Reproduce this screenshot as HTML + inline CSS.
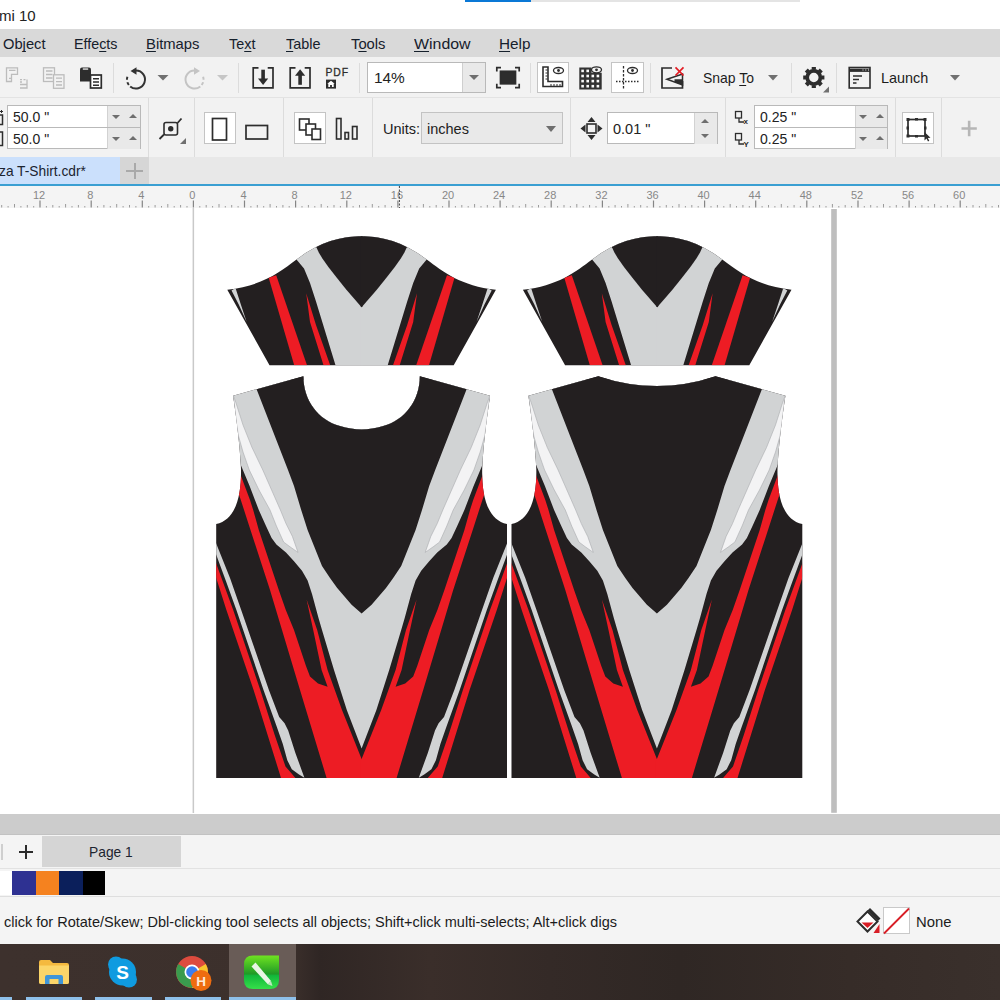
<!DOCTYPE html>
<html>
<head>
<meta charset="utf-8">
<title>CorelDRAW - T-Shirt</title>
<style>
*{box-sizing:border-box;margin:0;padding:0}
html,body{width:1000px;height:1000px;overflow:hidden;background:#fff}
body{position:relative;font-family:"Liberation Sans",sans-serif;color:#1a1a1a;font-size:14px}
.abs{position:absolute}
#title{left:0;top:0;width:1000px;height:29px;background:#fff}
#title .t{left:-1px;top:5.500px;font-size:15px;line-height:20px;color:#222;white-space:nowrap}
#menubar{left:0;top:29px;width:1000px;height:28px;background:#d9d9d9}
#menubar span{position:absolute;top:5.500px;font-size:15px;line-height:18px;color:#16202c;white-space:nowrap;transform-origin:0 50%}
#menubar u{text-decoration:underline;text-underline-offset:2px;text-decoration-skip-ink:none}
#tb1{left:0;top:57px;width:1000px;height:40px;background:#f2f2f2}
#tb2{left:0;top:97px;width:1000px;height:60px;background:#f2f2f2;border-top:1px solid #e3e3e3}
.sep{position:absolute;width:1px;background:#dcdcdc}
#tabbar{left:0;top:157px;width:1000px;height:28px;background:#e8e8e8}
#ruler{left:0;top:185px;width:1000px;height:23.500px;background:#f4f4f4;border-bottom:1px solid #dadada}
#canvas{left:0;top:208px;width:1000px;height:606px;background:#fff;overflow:hidden}
#hscroll{left:0;top:814px;width:1000px;height:21px;background:#cccccc;border-bottom:1px solid #c2c2c2}
#pagetabs{left:0;top:835px;width:1000px;height:33px;background:#f4f4f4}
#palette{left:0;top:868px;width:1000px;height:28px;background:#f4f4f4;border-top:1px solid #e2e2e2}
#status{left:0;top:896px;width:1000px;height:48px;background:#f4f4f4;border-top:1px solid #dedede}
#taskbar{left:0;top:944px;width:1000px;height:56px;background:linear-gradient(90deg,#3d312d 0%,#3c302c 29%,#2f2624 32%,#3a2e2a 43%,#342a27 55%,#2f2724 68%,#362c28 85%,#3a302c 100%)}
.inp{position:absolute;background:#fff;border:1px solid #b9b9b9;font-size:14px;color:#222}
.inp .v{position:absolute;left:5px;top:2px;line-height:18px;white-space:nowrap}
.spin{position:absolute;background:#e9e9e9}
.tri-d{position:absolute;width:0;height:0;border-left:4px solid transparent;border-right:4px solid transparent;border-top:4px solid #6e6e6e}
.tri-u{position:absolute;width:0;height:0;border-left:4px solid transparent;border-right:4px solid transparent;border-bottom:4px solid #6e6e6e}
.btnbox{position:absolute;background:#fff;border:1px solid #c4c4c4}
svg{position:absolute;left:0;top:0;overflow:visible}
.lbl{position:absolute;white-space:nowrap;color:#1c1c1c;transform-origin:0 50%}
</style>
</head>
<body>
<!-- TITLE -->
<div id="title" class="abs">
  <div class="abs" style="left:465px;top:0;width:66px;height:2px;background:#0a78d6"></div>
  <div class="abs" style="left:531px;top:0;width:269px;height:2px;background:#e4e4e4"></div>
  <div class="abs t">mi 10</div>
</div>
<!-- MENUBAR -->
<div id="menubar" class="abs">
  <span style="left:3px;transform:scaleX(0.98)">Ob<u>j</u>ect</span>
  <span style="left:74px;transform:scaleX(0.952)">Effe<u>c</u>ts</span>
  <span style="left:146px;transform:scaleX(0.987)"><u>B</u>itmaps</span>
  <span style="left:229px;transform:scaleX(0.96)">Te<u>x</u>t</span>
  <span style="left:286px;transform:scaleX(0.96)"><u>T</u>able</span>
  <span style="left:351px;transform:scaleX(0.985)">T<u>o</u>ols</span>
  <span style="left:414px;transform:scaleX(1.06)"><u>W</u>indow</span>
  <span style="left:499px;transform:scaleX(1.02)"><u>H</u>elp</span>
</div>
<!-- TOOLBAR 1 -->
<div id="tb1" class="abs">
 <div class="sep" style="left:113px;top:6px;height:30px"></div>
 <div class="sep" style="left:238px;top:6px;height:30px"></div>
 <div class="sep" style="left:359px;top:6px;height:30px"></div>
 <div class="sep" style="left:530px;top:6px;height:30px"></div>
 <div class="sep" style="left:650px;top:6px;height:30px"></div>
 <div class="sep" style="left:791px;top:6px;height:30px"></div>
 <div class="sep" style="left:836px;top:6px;height:30px"></div>
 <!-- zoom combobox -->
 <div class="inp" style="left:367px;top:5px;width:119px;height:31px"><div class="v" style="left:6px;top:6px;font-size:15.400px">14%</div>
   <div class="spin" style="left:94px;top:0;width:23px;height:29px;border-left:1px solid #cfcfcf"></div>
   <div class="tri-d" style="left:101px;top:12px;border-left-width:5px;border-right-width:5px;border-top-width:5px"></div>
 </div>
 <!-- highlighted button boxes -->
 <div class="btnbox" style="left:537px;top:5px;width:32px;height:31px"></div>
 <div class="btnbox" style="left:611px;top:5px;width:33px;height:31px"></div>
 <div class="lbl" style="left:703px;top:12.300px;font-size:15px;transform:scaleX(0.930);line-height:18px">Snap <u style="text-underline-offset:2px">T</u>o</div>
 <div class="lbl" style="left:881px;top:12.300px;font-size:15px;transform:scaleX(0.960);line-height:18px">Launch</div>
 <svg width="1000" height="40" viewBox="0 57 1000 40">
  <!-- icon 1 disabled -->
  <g fill="none" stroke="#bcbcbc" stroke-width="1.300">
   <path d="M6.500,67.800 H17.500 V74.300 H11.500 V81.500 H6.500 Z"/><path d="M9,70.300 H15.500 M9,78.300 H11"/>
   <path d="M20,79.700H22M23.500,79.700H25.500M27,79.500V88H20M20,84.500H26.500M20,82H22" />
  </g>
  <!-- icon 2 disabled -->
  <g fill="none" stroke="#bcbcbc" stroke-width="1.300">
   <rect x="43.500" y="67.800" width="11" height="13.700"/><path d="M46,71H52.500M46,74.500H52.500M46,78H52.500"/>
   <rect x="53.500" y="74.800" width="10.500" height="13.500" fill="#f2f2f2"/><path d="M56,78.200H62M56,81.600H62M56,85H62"/>
  </g>
  <!-- paste -->
  <g>
   <path d="M80,69.500 q0,-2 2,-2 h7 q2,0 2,2 V81.500 H80 Z" fill="#2d2d2d"/>
   <rect x="82.800" y="68.400" width="5.400" height="1.300" fill="#f2f2f2"/>
   <rect x="90.500" y="75" width="10.800" height="13" fill="#fff" stroke="#2d2d2d" stroke-width="1.700"/>
   <path d="M93,78.700H99M93,82H99M93,85.300H99" stroke="#2d2d2d" stroke-width="1.500"/>
  </g>
  <!-- undo -->
  <g fill="none" stroke="#333" stroke-width="2">
   <path d="M136,70.500 A9,9 0 1 1 130.200,86.400"/>
   <path d="M130.200,86.400 A9,9 0 0 1 127.500,76.400" stroke-dasharray="3 2.500" stroke-dashoffset="-2"/>
   <path d="M130.500,71 L136.500,67.200 L136.500,74.800Z" fill="#333" stroke="none"/>
  </g>
  <path d="M157.500,75 h11 l-5.500,5.500z" fill="#707070"/>
  <!-- redo disabled -->
  <g fill="none" stroke="#c4c4c4" stroke-width="2" transform="translate(330.500,0) scale(-1,1)">
   <path d="M136,70.500 A9,9 0 1 1 130.200,86.400"/>
   <path d="M130.200,86.400 A9,9 0 0 1 127.500,76.400" stroke-dasharray="3 2.500" stroke-dashoffset="-2"/>
   <path d="M130.500,71 L136.500,67.200 L136.500,74.800Z" fill="#c4c4c4" stroke="none"/>
  </g>
  <path d="M217,75 h11 l-5.500,5.500z" fill="#c6c6c6"/>
  <!-- import -->
  <g fill="none" stroke="#2d2d2d" stroke-width="1.700">
   <path d="M258.500,67.800 H253.200 V87.800 H273 V67.800 H267.700"/>
   <path d="M263.100,69.700 V80" stroke-width="3.600"/>
   <path d="M258,78.600 L263.100,85 L268.200,78.600 Z" fill="#2d2d2d" stroke="none"/>
  </g>
  <!-- export -->
  <g fill="none" stroke="#2d2d2d" stroke-width="1.700">
   <path d="M295.500,67.800 H290.200 V87.800 H310 V67.800 H304.700"/>
   <path d="M300.100,74.500 V84.800" stroke-width="3.600"/>
   <path d="M295,75.700 L300.100,69.200 L305.200,75.700 Z" fill="#2d2d2d" stroke="none"/>
  </g>
  <!-- PDF -->
  <text x="325.500" y="75.700" font-family="Liberation Sans, sans-serif" font-size="10.400" fill="#2d2d2d" stroke="#2d2d2d" stroke-width="0.300" textLength="22.500">PDF</text>
  <rect x="326" y="79.600" width="10" height="9" fill="#2d2d2d"/>
  <path d="M328.300,87 v-3.200 h-1 l3.700,-3 l3.700,3 h-1 v3.200 h-1.800 v-2 h-1.800 v2z" fill="#fff"/>
  <!-- full screen -->
  <g fill="none" stroke="#2d2d2d" stroke-width="1.700">
   <rect x="500.500" y="71.300" width="15" height="12.500" fill="#2d2d2d"/>
   <path d="M496.800,71.500 V67.700 H501 M515,67.700 H519.200 V71.500 M519.200,83.800 V87.600 H515 M501,87.600 H496.800 V83.800"/>
  </g>
  <!-- rulers icon -->
  <g fill="none" stroke="#2d2d2d" stroke-width="1.600">
   <path d="M543,67 V86.500 H562.500 V81.500 H548 V67 Z"/>
   <path d="M545.500,70H547.500M545.500,73H547.500M545.500,76H547.500M545.500,79H547.500M551,84V86M554,84V86M557,84V86M560,84V86" stroke-width="1"/>
   <ellipse cx="558.500" cy="70.500" rx="5" ry="3" stroke-width="1.300"/><circle cx="558.500" cy="70.500" r="1.400" fill="#2d2d2d" stroke="none"/>
  </g>
  <!-- grid icon -->
  <g>
   <path d="M579.300,67.600 H591.500 V72.700 H601.700 V89.600 H579.300 Z" fill="#333"/>
   <g fill="#fafafa"><rect x="581.3" y="69.6" width="2.600" height="2.600"/><rect x="586.4" y="69.6" width="2.600" height="2.600"/><rect x="581.3" y="74.7" width="2.600" height="2.600"/><rect x="586.4" y="74.7" width="2.600" height="2.600"/><rect x="591.5" y="74.7" width="2.600" height="2.600"/><rect x="596.6" y="74.7" width="2.600" height="2.600"/><rect x="581.3" y="79.8" width="2.600" height="2.600"/><rect x="586.4" y="79.8" width="2.600" height="2.600"/><rect x="591.5" y="79.8" width="2.600" height="2.600"/><rect x="596.6" y="79.8" width="2.600" height="2.600"/><rect x="581.3" y="84.9" width="2.600" height="2.600"/><rect x="586.4" y="84.9" width="2.600" height="2.600"/><rect x="591.5" y="84.9" width="2.600" height="2.600"/><rect x="596.6" y="84.9" width="2.600" height="2.600"/></g>
   <ellipse cx="596.500" cy="69.800" rx="5" ry="3" fill="#f2f2f2" stroke="#2d2d2d" stroke-width="1.300"/><circle cx="596.500" cy="69.800" r="1.400" fill="#2d2d2d"/>
  </g>
  <!-- guidelines icon -->
  <g fill="none" stroke="#2d2d2d" stroke-width="1.300">
   <path d="M623.500,66V89" stroke-dasharray="2.500 1.500"/>
   <path d="M616,81.500H639" stroke-dasharray="1.500 1.500"/>
   <ellipse cx="632.500" cy="70.500" rx="5" ry="3"/><circle cx="632.500" cy="70.500" r="1.400" fill="#2d2d2d" stroke="none"/>
  </g>
  <!-- snap off -->
  <g fill="none" stroke="#2d2d2d" stroke-width="1.700">
   <path d="M672,68 H662 V88 H682.500 V81"/>
   <path d="M667,79.300 L682.500,74 V85 Z" stroke-width="1.500"/>
   <path d="M674.500,79.300 H682.500 V85 L674.500,82Z" fill="#2d2d2d" stroke="none"/>
   <path d="M675.500,67.300 L683.500,75.500 M683.500,67.300 L675.500,75.500" stroke="#e31b23" stroke-width="1.700"/>
  </g>
  <path d="M768,75 h10 l-5,5.500z" fill="#707070"/>
  <!-- gear -->
  <g>
   <circle cx="813.800" cy="77.500" r="6.600" fill="none" stroke="#2d2d2d" stroke-width="3.700"/>
   <path d="M821.60,77.50L824.40,77.50M819.32,83.02L821.30,85.00M813.80,85.30L813.80,88.10M808.28,83.02L806.30,85.00M806.00,77.50L803.20,77.50M808.28,71.98L806.30,70.00M813.80,69.70L813.80,66.90M819.32,71.98L821.30,70.00" stroke="#2d2d2d" stroke-width="4.200" fill="none"/>
   <path d="M829,86.500 v6 h-6z" fill="#707070"/>
  </g>
  <!-- launch icon -->
  <g fill="none" stroke="#2d2d2d" stroke-width="1.600">
   <rect x="849.200" y="67.500" width="20.800" height="20.500"/>
   <path d="M849.200,70.300H870" stroke-width="3.200"/>
   <path d="M862.500,70H863.500M865.300,70H866.300M868,70H869" stroke="#f2f2f2" stroke-width="1"/>
   <path d="M853,76H862M853,79.500H859M853,83H856.500" stroke-width="1.400"/>
  </g>
  <path d="M950,75 h10 l-5,5.500z" fill="#707070"/>
 </svg>
</div>
<!-- PROPERTY BAR -->
<div id="tb2" class="abs">
 <div class="sep" style="left:148px;top:0;height:59px"></div>
 <div class="sep" style="left:194px;top:0;height:59px"></div>
 <div class="sep" style="left:283px;top:0;height:59px"></div>
 <div class="sep" style="left:372px;top:0;height:59px"></div>
 <div class="sep" style="left:570px;top:0;height:59px"></div>
 <div class="sep" style="left:725px;top:0;height:59px"></div>
 <div class="sep" style="left:895px;top:0;height:59px"></div>
 <div class="sep" style="left:941px;top:0;height:59px"></div>
 <!-- page size inputs -->
 <div class="inp" style="left:7px;top:7px;width:134px;height:23px"><div class="v">50.0 "</div>
   <div class="spin" style="left:99px;top:0;width:33px;height:21px;border-left:1px solid #d2d2d2"></div>
   <div class="tri-d" style="left:104px;top:9px"></div><div class="tri-u" style="left:121px;top:8px"></div></div>
 <div class="inp" style="left:7px;top:29px;width:134px;height:22px"><div class="v">50.0 "</div>
   <div class="spin" style="left:99px;top:0;width:33px;height:21px;border-left:1px solid #d2d2d2"></div>
   <div class="tri-d" style="left:104px;top:9px"></div><div class="tri-u" style="left:121px;top:8px"></div></div>
 <!-- portrait / landscape -->
 <div class="btnbox" style="left:204px;top:14px;width:32px;height:32px"></div>
 <div class="btnbox" style="left:294px;top:14px;width:32px;height:32px"></div>
 <div class="lbl" style="left:383px;top:22px;font-size:14.5px;line-height:18px">Units:</div>
 <div class="inp" style="left:421px;top:14px;width:142px;height:32px;background:#e9e9e9;border-color:#c3c3c3"><div class="v" style="left:5px;top:7px;font-size:14.5px">inches</div>
   <div class="tri-d" style="left:123.500px;top:12.500px;border-left-width:5.500px;border-right-width:5.500px;border-top-width:6px"></div></div>
 <!-- nudge input -->
 <div class="inp" style="left:607px;top:14px;width:111px;height:32px"><div class="v" style="left:5px;top:7px;font-size:14.5px">0.01 "</div>
   <div class="spin" style="left:86px;top:0;width:23px;height:31px;border-left:1px solid #d2d2d2"></div>
   <div class="tri-u" style="left:93px;top:6px"></div><div class="tri-d" style="left:93px;top:21px"></div></div>
 <!-- duplicate distance inputs -->
 <div class="inp" style="left:754px;top:7px;width:134px;height:23px"><div class="v">0.25 "</div>
   <div class="spin" style="left:100px;top:0;width:32px;height:21px;border-left:1px solid #d2d2d2"></div>
   <div class="tri-d" style="left:104px;top:9px"></div><div class="tri-u" style="left:121px;top:8px"></div></div>
 <div class="inp" style="left:754px;top:29px;width:134px;height:22px"><div class="v">0.25 "</div>
   <div class="spin" style="left:100px;top:0;width:32px;height:21px;border-left:1px solid #d2d2d2"></div>
   <div class="tri-d" style="left:104px;top:9px"></div><div class="tri-u" style="left:121px;top:8px"></div></div>
 <div class="btnbox" style="left:902px;top:14px;width:32px;height:32px"></div>
 <svg width="1000" height="60" viewBox="0 97 1000 60">
  <!-- partial left icons -->
  <g fill="none" stroke="#2d2d2d" stroke-width="1.500">
   <rect x="-5" y="114" width="7.500" height="9.500"/><path d="M1.500,109V112M0,110.500H3" stroke-width="1"/>
   <rect x="-5" y="131" width="7.500" height="13.500"/>
  </g>
  <!-- resize icon -->
  <g fill="none" stroke="#2d2d2d" stroke-width="1.600">
   <rect x="164" y="121.500" width="13.500" height="12.500" rx="2"/>
   <circle cx="170.750" cy="127.750" r="2.700" fill="#2d2d2d" stroke="none"/>
   <path d="M159.500,138 L164,133.500 M177.500,122 L181.500,117.500" stroke-width="1.800"/>
   <path d="M186,137 v6 h-6z" fill="#707070" stroke="none"/>
  </g>
  <!-- portrait -->
  <rect x="212.500" y="117.500" width="14" height="21.500" fill="#fff" stroke="#2d2d2d" stroke-width="1.700"/>
  <!-- landscape -->
  <rect x="246" y="124.500" width="21.500" height="13.500" fill="none" stroke="#2d2d2d" stroke-width="1.700"/>
  <!-- all pages -->
  <g fill="#fff" stroke="#2d2d2d" stroke-width="1.600">
   <rect x="299.500" y="118" width="9.500" height="11"/>
   <rect x="306" y="123" width="9.500" height="11"/>
   <rect x="312" y="128" width="8.500" height="10.500"/>
  </g>
  <!-- current page -->
  <g fill="none" stroke="#2d2d2d" stroke-width="1.600">
   <rect x="336.500" y="117.500" width="4.500" height="20.500"/>
   <rect x="345" y="131.500" width="3.500" height="6.500"/>
   <rect x="352.500" y="125.500" width="4.500" height="12.500"/>
  </g>
  <!-- nudge icon -->
  <g fill="#2d2d2d">
   <rect x="587" y="123" width="9" height="9" fill="none" stroke="#2d2d2d" stroke-width="1.600"/>
   <path d="M591.500,116 l4,5 h-8z M591.500,139 l4,-5 h-8z M580.500,127.500 l5,-4 v8z M602.500,127.500 l-5,-4 v8z"/>
  </g>
  <!-- dup distance icons -->
  <g fill="none" stroke="#2d2d2d" stroke-width="1.300">
   <rect x="735.500" y="110.500" width="6" height="6.500"/><path d="M739,117 V121 H744"/>
   <rect x="735.500" y="132.500" width="6" height="6.500"/><path d="M739,139 V143 H744"/>
  </g>
  <text x="743.500" y="123" font-family="Liberation Sans, sans-serif" font-size="8" font-weight="bold" fill="#2d2d2d">x</text>
  <text x="743.500" y="146" font-family="Liberation Sans, sans-serif" font-size="8" font-weight="bold" fill="#2d2d2d">Y</text>
  <!-- bounding box icon -->
  <g fill="none" stroke="#2d2d2d" stroke-width="1.700">
   <rect x="908" y="118.500" width="17" height="16.500"/>
  </g>
  <g fill="#2d2d2d">
   <rect x="906.500" y="117" width="3" height="3"/><rect x="915" y="117" width="3" height="2.500"/><rect x="923.500" y="117" width="3" height="3"/>
   <rect x="906.500" y="125.500" width="2.500" height="3"/><rect x="924" y="125.500" width="2.500" height="3"/>
   <rect x="906.500" y="133.500" width="3" height="3"/><rect x="915" y="134" width="3" height="2.500"/>
   <path d="M924.500,131 L924.500,139.500 L926.500,137.500 L928,140.500 L929.300,139.800 L927.800,137 L930.500,136.700Z"/>
  </g>
  <!-- plus -->
  <path d="M961.500,127.500H976.800M969.150,119.800V135.200" stroke="#b6b6b6" stroke-width="2.600" fill="none"/>
 </svg>
</div>
<!-- DOC TABS -->
<div id="tabbar" class="abs">
  <div class="abs" style="left:0;top:0;width:120px;height:28px;background:#cbe0fc"></div>
  <div class="abs" style="left:120px;top:0;width:29px;height:28px;background:#d6d6d6"></div>
  <div class="abs" style="left:-1px;top:5px;font-size:15px;transform-origin:0 50%;transform:scaleX(0.917);line-height:18px;color:#1b2430;white-space:nowrap">za T-Shirt.cdr*</div>
  <div class="abs" style="left:126px;top:13px;width:17px;height:2px;background:#a9a9a9"></div>
  <div class="abs" style="left:133.5px;top:6px;width:2px;height:16px;background:#a9a9a9"></div>
</div>

<!-- RULER -->
<div id="ruler" class="abs">
<svg width="1000" height="24" viewBox="0 185 1000 24">
<path d="M1.7,205V207.500M8.1,206V207.500M14.5,204V207.500M20.9,206V207.500M27.3,205V207.500M33.7,206V207.500M46.4,206V207.500M52.8,205V207.500M59.2,206V207.500M65.6,204V207.500M72.0,206V207.500M78.4,205V207.500M84.8,206V207.500M97.6,206V207.500M103.9,205V207.500M110.3,206V207.500M116.7,204V207.500M123.1,206V207.500M129.5,205V207.500M135.9,206V207.500M148.7,206V207.500M155.1,205V207.500M161.5,206V207.500M167.8,204V207.500M174.2,206V207.500M180.6,205V207.500M187.0,206V207.500M199.8,206V207.500M206.2,205V207.500M212.6,206V207.500M219.0,204V207.500M225.3,206V207.500M231.7,205V207.500M238.1,206V207.500M250.9,206V207.500M257.3,205V207.500M263.7,206V207.500M270.1,204V207.500M276.5,206V207.500M282.9,205V207.500M289.2,206V207.500M302.0,206V207.500M308.4,205V207.500M314.8,206V207.500M321.2,204V207.500M327.6,206V207.500M334.0,205V207.500M340.4,206V207.500M353.1,206V207.500M359.5,205V207.500M365.9,206V207.500M372.3,204V207.500M378.7,206V207.500M385.1,205V207.500M391.5,206V207.500M404.3,206V207.500M410.7,205V207.500M417.0,206V207.500M423.4,204V207.500M429.8,206V207.500M436.2,205V207.500M442.6,206V207.500M455.4,206V207.500M461.8,205V207.500M468.2,206V207.500M474.6,204V207.500M481.0,206V207.500M487.3,205V207.500M493.7,206V207.500M506.5,206V207.500M512.9,205V207.500M519.3,206V207.500M525.7,204V207.500M532.1,206V207.500M538.5,205V207.500M544.9,206V207.500M557.6,206V207.500M564.0,205V207.500M570.4,206V207.500M576.8,204V207.500M583.2,206V207.500M589.6,205V207.500M596.0,206V207.500M608.8,206V207.500M615.1,205V207.500M621.5,206V207.500M627.9,204V207.500M634.3,206V207.500M640.7,205V207.500M647.1,206V207.500M659.9,206V207.500M666.3,205V207.500M672.6,206V207.500M679.0,204V207.500M685.4,206V207.500M691.8,205V207.500M698.2,206V207.500M711.0,206V207.500M717.4,205V207.500M723.8,206V207.500M730.2,204V207.500M736.5,206V207.500M742.9,205V207.500M749.3,206V207.500M762.1,206V207.500M768.5,205V207.500M774.9,206V207.500M781.3,204V207.500M787.7,206V207.500M794.1,205V207.500M800.4,206V207.500M813.2,206V207.500M819.6,205V207.500M826.0,206V207.500M832.4,204V207.500M838.8,206V207.500M845.2,205V207.500M851.6,206V207.500M864.3,206V207.500M870.7,205V207.500M877.1,206V207.500M883.5,204V207.500M889.9,206V207.500M896.3,205V207.500M902.7,206V207.500M915.5,206V207.500M921.9,205V207.500M928.2,206V207.500M934.6,204V207.500M941.0,206V207.500M947.4,205V207.500M953.8,206V207.500M966.6,206V207.500M973.0,205V207.500M979.4,206V207.500M985.8,204V207.500M992.1,206V207.500M998.5,205V207.500" stroke="#9a9a9a" stroke-width="1" fill="none"/>
<path d="M40.0,200.500V207.500M91.2,200.500V207.500M142.3,200.500V207.500M193.4,200.500V207.500M244.5,200.500V207.500M295.6,200.500V207.500M346.8,200.500V207.500M397.9,200.500V207.500M449.0,200.500V207.500M500.1,200.500V207.500M551.2,200.500V207.500M602.4,200.500V207.500M653.5,200.500V207.500M704.6,200.500V207.500M755.7,200.500V207.500M806.8,200.500V207.500M858.0,200.500V207.500M909.1,200.500V207.500M960.2,200.500V207.500" stroke="#858585" stroke-width="1.200" fill="none"/>
<g font-family="Liberation Sans, sans-serif" font-size="11" fill="#878787" text-anchor="middle">
<text x="39.0" y="198.500">12</text><text x="90.2" y="198.500">8</text><text x="141.3" y="198.500">4</text><text x="192.4" y="198.500">0</text><text x="243.5" y="198.500">4</text><text x="294.6" y="198.500">8</text><text x="345.8" y="198.500">12</text><text x="396.9" y="198.500">16</text><text x="448.0" y="198.500">20</text><text x="499.1" y="198.500">24</text><text x="550.2" y="198.500">28</text><text x="601.4" y="198.500">32</text><text x="652.5" y="198.500">36</text><text x="703.6" y="198.500">40</text><text x="754.7" y="198.500">44</text><text x="805.8" y="198.500">48</text><text x="857.0" y="198.500">52</text><text x="908.1" y="198.500">56</text><text x="959.2" y="198.500">60</text>
</g>
<path d="M399.400,186V210" stroke="#444" stroke-width="1" stroke-dasharray="2 1.500" fill="none"/>
</svg>
</div>
<div class="abs" style="left:0;top:184.300px;width:1000px;height:1.500px;background:#3a9fd2"></div>
<!-- CANVAS -->
<div id="canvas" class="abs">
<svg width="1000" height="606" viewBox="0 208 1000 606">
<rect x="192.600" y="208" width="1.500" height="605" fill="#c9c9c9"/>
<rect x="831.200" y="209" width="5.600" height="603.800" fill="#bebebe"/>
<g transform="translate(0,0)">
<clipPath id="cs1"><path d="M227.3,289.8 C262,286 280,272 296.5,259.5 C322,240 345,236.3 361.6,236.3 C378.2,236.300 401.2,240 426.7,259.5 C443.2,272 461.2,286 495.9,289.8 L453.7,365.2 L269.5,365.2 Z"/></clipPath>
<path d="M227.3,289.8 C262,286 280,272 296.5,259.5 C322,240 345,236.3 361.6,236.3 C378.2,236.300 401.2,240 426.7,259.5 C443.2,272 461.2,286 495.9,289.8 L453.7,365.2 L269.5,365.2 Z" fill="#231f20"/>
<g clip-path="url(#cs1)">
<polygon points="290.0,250.0 296.5,259.5 304.0,268.5 310.0,283.0 316.0,301.5 335.5,365.2 362.6,365.2 362.6,230.0 300.0,230.0" fill="#d1d3d4" />
<polygon points="433.2,250.0 426.7,259.5 419.2,268.5 413.2,283.0 407.2,301.5 387.7,365.2 360.6,365.2 360.6,230.0 423.2,230.0" fill="#d1d3d4" />
<polygon points="316.4,247.2 318.8,252.5 322.4,258.6 328.4,267.0 336.8,277.8 346.4,289.8 361.6,307.2 362.6,306.3 362.6,225.0 316.0,225.0" fill="#231f20" />
<polygon points="268.7,277.8 276.2,275.2 307.0,365.2 294.2,365.2" fill="#ed1c24" />
<polygon points="306.2,293.2 316.0,325.0 330.2,365.2 323.5,365.2 310.0,322.0" fill="#ed1c24" />
<polygon points="231.5,290.5 235.5,288.0 241.0,305.0 246.7,322.0 238.5,304.0" fill="#d1d3d4" />
<polygon points="406.8,247.2 404.4,252.5 400.8,258.6 394.8,267.0 386.4,277.8 376.8,289.8 361.6,307.2 360.6,306.3 360.6,225.0 407.2,225.0" fill="#231f20" />
<polygon points="454.5,277.8 447.0,275.2 416.2,365.2 429.0,365.2" fill="#ed1c24" />
<polygon points="417.0,293.2 407.2,325.0 393.0,365.2 399.7,365.2 413.2,322.0" fill="#ed1c24" />
<polygon points="491.7,290.5 487.7,288.0 482.2,305.0 476.5,322.0 484.7,304.0" fill="#d1d3d4" />
</g>
</g>
<g transform="translate(295.6,0)">
<clipPath id="cs2"><path d="M227.3,289.8 C262,286 280,272 296.5,259.5 C322,240 345,236.3 361.6,236.3 C378.2,236.300 401.2,240 426.7,259.5 C443.2,272 461.2,286 495.9,289.8 L453.7,365.2 L269.5,365.2 Z"/></clipPath>
<path d="M227.3,289.8 C262,286 280,272 296.5,259.5 C322,240 345,236.3 361.6,236.3 C378.2,236.300 401.2,240 426.7,259.5 C443.2,272 461.2,286 495.9,289.8 L453.7,365.2 L269.5,365.2 Z" fill="#231f20"/>
<g clip-path="url(#cs2)">
<polygon points="290.0,250.0 296.5,259.5 304.0,268.5 310.0,283.0 316.0,301.5 335.5,365.2 362.6,365.2 362.6,230.0 300.0,230.0" fill="#d1d3d4" />
<polygon points="433.2,250.0 426.7,259.5 419.2,268.5 413.2,283.0 407.2,301.5 387.7,365.2 360.6,365.2 360.6,230.0 423.2,230.0" fill="#d1d3d4" />
<polygon points="316.4,247.2 318.8,252.5 322.4,258.6 328.4,267.0 336.8,277.8 346.4,289.8 361.6,307.2 362.6,306.3 362.6,225.0 316.0,225.0" fill="#231f20" />
<polygon points="268.7,277.8 276.2,275.2 307.0,365.2 294.2,365.2" fill="#ed1c24" />
<polygon points="306.2,293.2 316.0,325.0 330.2,365.2 323.5,365.2 310.0,322.0" fill="#ed1c24" />
<polygon points="231.5,290.5 235.5,288.0 241.0,305.0 246.7,322.0 238.5,304.0" fill="#d1d3d4" />
<polygon points="406.8,247.2 404.4,252.5 400.8,258.6 394.8,267.0 386.4,277.8 376.8,289.8 361.6,307.2 360.6,306.3 360.6,225.0 407.2,225.0" fill="#231f20" />
<polygon points="454.5,277.8 447.0,275.2 416.2,365.2 429.0,365.2" fill="#ed1c24" />
<polygon points="417.0,293.2 407.2,325.0 393.0,365.2 399.7,365.2 413.2,322.0" fill="#ed1c24" />
<polygon points="491.7,290.5 487.7,288.0 482.2,305.0 476.5,322.0 484.7,304.0" fill="#d1d3d4" />
</g>
</g>
<g transform="translate(0,0)">
<clipPath id="cb1"><path d="M233.1,395.7 L303.4,376.2 C303.4,400 318,420 340,426 C347,428.2 355,429.4 361.6,429.4 C368.2,429.4 376.2,428.2 383.2,426 C405.2,420 419.8,400 419.8,376.2 L490.1,395.7 C487.2,415 483.2,445 482.2,469 C481.7,495 487.2,520 507,524 L507,778 L216.2,778 L216.2,524 C236,520 241.5,495 241,469 C240,445 236,415 233.1,395.7 Z"/></clipPath>
<path d="M233.1,395.7 L303.4,376.2 C303.4,400 318,420 340,426 C347,428.2 355,429.4 361.6,429.4 C368.2,429.4 376.2,428.2 383.2,426 C405.2,420 419.8,400 419.8,376.2 L490.1,395.7 C487.2,415 483.2,445 482.2,469 C481.7,495 487.2,520 507,524 L507,778 L216.2,778 L216.2,524 C236,520 241.5,495 241,469 C240,445 236,415 233.1,395.7 Z" fill="#231f20"/>
<g clip-path="url(#cb1)">
<polygon points="225.0,380.0 233.1,395.7 236.7,425.0 239.4,452.0 240.6,464.4 249.6,486.0 258.8,510.0 266.0,526.0 271.6,538.0 276.4,544.4 286.0,552.4 294.0,561.2 302.0,570.8 307.6,580.4 312.0,594.0 318.5,618.0 322.0,630.0 334.0,670.0 346.8,710.0 361.6,748.5 376.4,710.0 389.2,670.0 401.2,630.0 404.7,618.0 411.2,594.0 415.6,580.4 421.2,570.8 429.2,561.2 437.2,552.4 446.8,544.4 451.6,538.0 457.2,526.0 464.4,510.0 473.6,486.0 482.6,464.4 483.8,452.0 486.5,425.0 490.1,395.7 498.2,380.0" fill="#d1d3d4" />
<polygon points="250.0,360.0 256.5,389.0 288.0,470.0 294.0,486.0 301.2,510.0 307.6,530.0 314.0,546.0 322.0,566.0 330.0,578.0 337.2,588.0 351.6,604.8 361.6,613.4 371.6,604.8 386.0,588.0 393.2,578.0 401.2,566.0 409.2,546.0 415.6,530.0 422.0,510.0 429.2,486.0 435.2,470.0 466.7,389.0 473.2,360.0" fill="#231f20" />
<polygon points="232.0,392.0 234.0,400.7 236.7,425.0 238.5,436.0 243.0,452.0 249.3,470.0 259.0,490.0 270.0,510.0 276.4,526.0 283.6,542.0 290.0,546.8 298.0,552.4 292.4,536.4 286.0,523.6 280.4,510.0 262.8,470.0 252.0,447.5 243.0,425.0 236.0,403.0" fill="#f3f3f4" stroke="#a9abae" stroke-width="0.6"/>
<polygon points="234.0,480.0 240.8,500.0 250.0,528.4 270.0,590.0 276.0,610.0 282.0,630.0 300.0,690.0 326.6,778.0 362.6,778.0 362.6,760.5 361.6,759.0 342.0,710.0 327.6,670.0 317.2,630.0 306.6,599.4 313.2,630.0 321.6,670.0 327.6,686.8 318.0,683.6 310.0,676.4 306.0,666.0 294.0,630.0 285.8,610.0 278.8,590.0 258.8,530.0 253.2,510.0 250.0,500.0 238.0,468.0" fill="#ed1c24" />
<polygon points="215.0,540.5 216.2,543.6 230.0,578.0 241.2,610.0 268.9,690.0 279.2,717.0 284.6,723.3 288.2,730.5 295.4,753.0 304.4,777.7 299.0,774.6 291.8,769.2 287.3,760.2 282.8,744.0 276.5,726.0 263.5,690.0 236.4,610.0 226.0,581.2 216.2,554.8 215.0,552.0" fill="#d1d3d4" />
<polygon points="215.0,560.5 216.2,563.6 224.4,586.0 233.2,610.0 260.3,690.0 274.7,735.0 285.5,766.5 291.8,773.7 295.4,778.0 281.0,778.0 253.6,690.0 226.4,610.0 216.2,578.0 215.0,574.0" fill="#ed1c24" />
<polygon points="491.2,392.0 489.2,400.7 486.5,425.0 484.7,436.0 480.2,452.0 473.9,470.0 464.2,490.0 453.2,510.0 446.8,526.0 439.6,542.0 433.2,546.8 425.2,552.4 430.8,536.4 437.2,523.6 442.8,510.0 460.4,470.0 471.2,447.5 480.2,425.0 487.2,403.0" fill="#f3f3f4" stroke="#a9abae" stroke-width="0.6"/>
<polygon points="489.2,480.0 482.4,500.0 473.2,528.4 453.2,590.0 447.2,610.0 441.2,630.0 423.2,690.0 396.6,778.0 360.6,778.0 360.6,760.5 361.6,759.0 381.2,710.0 395.6,670.0 406.0,630.0 416.6,599.4 410.0,630.0 401.6,670.0 395.6,686.8 405.2,683.6 413.2,676.4 417.2,666.0 429.2,630.0 437.4,610.0 444.4,590.0 464.4,530.0 470.0,510.0 473.2,500.0 485.2,468.0" fill="#ed1c24" />
<polygon points="508.2,540.5 507.0,543.6 493.2,578.0 482.0,610.0 454.3,690.0 444.0,717.0 438.6,723.3 435.0,730.5 427.8,753.0 418.8,777.7 424.2,774.6 431.4,769.2 435.9,760.2 440.4,744.0 446.7,726.0 459.7,690.0 486.8,610.0 497.2,581.2 507.0,554.8 508.2,552.0" fill="#d1d3d4" />
<polygon points="508.2,560.5 507.0,563.6 498.8,586.0 490.0,610.0 462.9,690.0 448.5,735.0 437.7,766.5 431.4,773.7 427.8,778.0 442.2,778.0 469.6,690.0 496.8,610.0 507.0,578.0 508.2,574.0" fill="#ed1c24" />
</g>
</g>
<g transform="translate(295.3,0)">
<clipPath id="cb2"><path d="M233.1,395.7 L303,376.2 Q361.6,395.800 420.2,376.2 L490.1,395.7 C487.2,415 483.2,445 482.2,469 C481.7,495 487.2,520 507,524 L507,778 L216.2,778 L216.2,524 C236,520 241.5,495 241,469 C240,445 236,415 233.1,395.7 Z"/></clipPath>
<path d="M233.1,395.7 L303,376.2 Q361.6,395.800 420.2,376.2 L490.1,395.7 C487.2,415 483.2,445 482.2,469 C481.7,495 487.2,520 507,524 L507,778 L216.2,778 L216.2,524 C236,520 241.5,495 241,469 C240,445 236,415 233.1,395.7 Z" fill="#231f20"/>
<g clip-path="url(#cb2)">
<polygon points="225.0,380.0 233.1,395.7 236.7,425.0 239.4,452.0 240.6,464.4 249.6,486.0 258.8,510.0 266.0,526.0 271.6,538.0 276.4,544.4 286.0,552.4 294.0,561.2 302.0,570.8 307.6,580.4 312.0,594.0 318.5,618.0 322.0,630.0 334.0,670.0 346.8,710.0 361.6,748.5 376.4,710.0 389.2,670.0 401.2,630.0 404.7,618.0 411.2,594.0 415.6,580.4 421.2,570.8 429.2,561.2 437.2,552.4 446.8,544.4 451.6,538.0 457.2,526.0 464.4,510.0 473.6,486.0 482.6,464.4 483.8,452.0 486.5,425.0 490.1,395.7 498.2,380.0" fill="#d1d3d4" />
<polygon points="250.0,360.0 256.5,389.0 288.0,470.0 294.0,486.0 301.2,510.0 307.6,530.0 314.0,546.0 322.0,566.0 330.0,578.0 337.2,588.0 351.6,604.8 361.6,613.4 371.6,604.8 386.0,588.0 393.2,578.0 401.2,566.0 409.2,546.0 415.6,530.0 422.0,510.0 429.2,486.0 435.2,470.0 466.7,389.0 473.2,360.0" fill="#231f20" />
<polygon points="232.0,392.0 234.0,400.7 236.7,425.0 238.5,436.0 243.0,452.0 249.3,470.0 259.0,490.0 270.0,510.0 276.4,526.0 283.6,542.0 290.0,546.8 298.0,552.4 292.4,536.4 286.0,523.6 280.4,510.0 262.8,470.0 252.0,447.5 243.0,425.0 236.0,403.0" fill="#f3f3f4" stroke="#a9abae" stroke-width="0.6"/>
<polygon points="234.0,480.0 240.8,500.0 250.0,528.4 270.0,590.0 276.0,610.0 282.0,630.0 300.0,690.0 326.6,778.0 362.6,778.0 362.6,760.5 361.6,759.0 342.0,710.0 327.6,670.0 317.2,630.0 306.6,599.4 313.2,630.0 321.6,670.0 327.6,686.8 318.0,683.6 310.0,676.4 306.0,666.0 294.0,630.0 285.8,610.0 278.8,590.0 258.8,530.0 253.2,510.0 250.0,500.0 238.0,468.0" fill="#ed1c24" />
<polygon points="215.0,540.5 216.2,543.6 230.0,578.0 241.2,610.0 268.9,690.0 279.2,717.0 284.6,723.3 288.2,730.5 295.4,753.0 304.4,777.7 299.0,774.6 291.8,769.2 287.3,760.2 282.8,744.0 276.5,726.0 263.5,690.0 236.4,610.0 226.0,581.2 216.2,554.8 215.0,552.0" fill="#d1d3d4" />
<polygon points="215.0,560.5 216.2,563.6 224.4,586.0 233.2,610.0 260.3,690.0 274.7,735.0 285.5,766.5 291.8,773.7 295.4,778.0 281.0,778.0 253.6,690.0 226.4,610.0 216.2,578.0 215.0,574.0" fill="#ed1c24" />
<polygon points="491.2,392.0 489.2,400.7 486.5,425.0 484.7,436.0 480.2,452.0 473.9,470.0 464.2,490.0 453.2,510.0 446.8,526.0 439.6,542.0 433.2,546.8 425.2,552.4 430.8,536.4 437.2,523.6 442.8,510.0 460.4,470.0 471.2,447.5 480.2,425.0 487.2,403.0" fill="#f3f3f4" stroke="#a9abae" stroke-width="0.6"/>
<polygon points="489.2,480.0 482.4,500.0 473.2,528.4 453.2,590.0 447.2,610.0 441.2,630.0 423.2,690.0 396.6,778.0 360.6,778.0 360.6,760.5 361.6,759.0 381.2,710.0 395.6,670.0 406.0,630.0 416.6,599.4 410.0,630.0 401.6,670.0 395.6,686.8 405.2,683.6 413.2,676.4 417.2,666.0 429.2,630.0 437.4,610.0 444.4,590.0 464.4,530.0 470.0,510.0 473.2,500.0 485.2,468.0" fill="#ed1c24" />
<polygon points="508.2,540.5 507.0,543.6 493.2,578.0 482.0,610.0 454.3,690.0 444.0,717.0 438.6,723.3 435.0,730.5 427.8,753.0 418.8,777.7 424.2,774.6 431.4,769.2 435.9,760.2 440.4,744.0 446.7,726.0 459.7,690.0 486.8,610.0 497.2,581.2 507.0,554.8 508.2,552.0" fill="#d1d3d4" />
<polygon points="508.2,560.5 507.0,563.6 498.8,586.0 490.0,610.0 462.9,690.0 448.5,735.0 437.7,766.5 431.4,773.7 427.8,778.0 442.2,778.0 469.6,690.0 496.8,610.0 507.0,578.0 508.2,574.0" fill="#ed1c24" />
</g>
</g>
</svg>
</div>
<!-- H SCROLL -->
<div id="hscroll" class="abs"></div>
<!-- PAGE TABS -->
<div id="pagetabs" class="abs">
  <div class="abs" style="left:1px;top:9px;width:2px;height:16px;background:#cfcfcf"></div>
  <div class="abs" style="left:42px;top:1px;width:139px;height:31px;background:#d5d5d5"></div>
  <div class="abs" style="left:19.200px;top:16.400px;width:14px;height:1.800px;background:#2b2b2b"></div>
  <div class="abs" style="left:25.300px;top:10.300px;width:1.800px;height:14px;background:#2b2b2b"></div>
  <div class="lbl" style="left:88.500px;top:8px;font-size:15px;transform:scaleX(0.920);line-height:18px;color:#1c2430">Page 1</div>
</div>
<!-- PALETTE -->
<div id="palette" class="abs">
  <div class="abs" style="left:0;top:2px;width:12px;height:24px;background:#fff"></div>
  <div class="abs" style="left:12px;top:2px;width:24px;height:24px;background:#2e3192"></div>
  <div class="abs" style="left:36px;top:2px;width:23px;height:24px;background:#f5821f"></div>
  <div class="abs" style="left:59px;top:2px;width:24px;height:24px;background:#0b1f5b"></div>
  <div class="abs" style="left:83px;top:2px;width:22px;height:24px;background:#000"></div>
</div>
<!-- STATUS -->
<div id="status" class="abs">
  <div class="lbl" style="left:4px;top:15.500px;font-size:15px;transform:scaleX(0.9675);line-height:18px;color:#1b1b1b">click for Rotate/Skew; Dbl-clicking tool selects all objects; Shift+click multi-selects; Alt+click digs</div>
  <div class="abs" style="left:882.500px;top:9.500px;width:27.500px;height:27.500px;background:#fff;border:1px solid #c9c9c9"></div>
  <div class="lbl" style="left:916px;top:15.500px;font-size:15px;transform:scaleX(0.990);line-height:18px">None</div>
  <svg width="1000" height="48" viewBox="0 896 1000 48">
    <path d="M884,932.500 L909,907.500" stroke="#d81e26" stroke-width="1.800"/>
    <!-- fill bucket -->
    <path d="M867.500,910.500 L877.500,920.500 L867.500,930.500 L857.500,920.500Z" fill="#fff" stroke="#2d2d2d" stroke-width="2"/>
    <path d="M867.500,909.500 L870,907 L880.500,917.500 L878,920Z" fill="#2d2d2d"/>
    <path d="M861.500,921.500 H873.500 L867.500,927Z" fill="#d81e26"/>
    <path d="M879.500,923 V932 H873.500Z" fill="#d81e26"/>
  </svg>
</div>
<!-- TASKBAR -->
<div id="taskbar" class="abs">
  <div class="abs" style="left:229px;top:0;width:67px;height:56px;background:#695c57"></div>
  <div class="abs" style="left:0;top:53px;width:12px;height:3px;background:#8ec0ea"></div>
  <div class="abs" style="left:26px;top:53px;width:56px;height:3px;background:#8ec0ea"></div>
  <div class="abs" style="left:95px;top:53px;width:57px;height:3px;background:#8ec0ea"></div>
  <div class="abs" style="left:165px;top:53px;width:56px;height:3px;background:#8ec0ea"></div>
  <div class="abs" style="left:229px;top:53px;width:67px;height:3px;background:#8ec0ea"></div>
  <svg width="1000" height="56" viewBox="0 944 1000 56">
    <!-- folder -->
    <path d="M39,962 q0,-2 2,-2 h9 l3,3 h14 q2,0 2,2 v17 q0,2 -2,2 h-26 q-2,0 -2,-2z" fill="#f4b93f"/>
    <path d="M39,965.500 h30 v16.500 q0,2 -2,2 h-26 q-2,0 -2,-2z" fill="#fbd569"/>
    <path d="M45,984 v-7 q0,-2 2,-2 h14 q2,0 2,2 v7 h-4.500 v-5 h-9 v5z" fill="#3f95d8"/>
    <!-- skype -->
    <circle cx="122.500" cy="972" r="13.500" fill="#0f9be0"/>
    <circle cx="116" cy="964.500" r="8" fill="#0f9be0"/><circle cx="129" cy="979.500" r="8" fill="#0f9be0"/>
    <text x="122.500" y="979" text-anchor="middle" font-family="Liberation Sans, sans-serif" font-weight="bold" font-size="19" fill="#fff">S</text>
    <!-- chrome -->
    <circle cx="192" cy="972" r="16" fill="#dd4b3e"/>
    <path d="M192,972 L178.200,964 A16,16 0 0 0 192,988 L200,976.500Z" fill="#3a9b4e"/>
    <path d="M192,972 L200,976.500 L192,988 A16,16 0 0 0 205.800,964Z" fill="#f7c52d"/>
    <circle cx="192" cy="972" r="7.500" fill="#fff"/><circle cx="192" cy="972" r="5.800" fill="#3b7ded"/>
    <circle cx="201" cy="980.500" r="10.500" fill="#ee6c10"/>
    <text x="201" y="985.500" text-anchor="middle" font-family="Liberation Sans, sans-serif" font-weight="bold" font-size="13.500" fill="#ffe9d6">H</text>
    <!-- corel -->
    <defs><linearGradient id="cg" x1="0" y1="0" x2="0" y2="1"><stop offset="0" stop-color="#6fe321"/><stop offset="0.550" stop-color="#1f9a26"/><stop offset="0.600" stop-color="#12b83a"/><stop offset="1" stop-color="#35e04a"/></linearGradient></defs>
    <path d="M253,955.500 H279 V980 Q279,989 270,989 H253 Q244,989 244,980 V964.500 Q244,955.500 253,955.500Z" fill="url(#cg)"/>
    <path d="M251.500,966.500 L255.500,962.500 L271,981 L268,984.500Z" fill="#e9f5e4"/>
    <path d="M268,984.500 L271,981 L272.500,986Z" fill="#bfe6c0"/>
  </svg>
</div>
</body>
</html>
